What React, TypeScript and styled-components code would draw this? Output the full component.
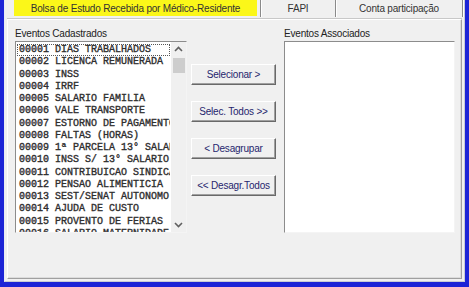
import styled, { createGlobalStyle } from "styled-components";

const GlobalStyle = createGlobalStyle`
  html, body {
    margin: 0;
    padding: 0;
    background: #1c24d6;
  }
  * {
    box-sizing: border-box;
  }
`;

const Frame = styled.div`
  width: 469px;
  height: 287px;
  background: #1c24d6;
  padding: 0 4px 5px 4px;
  overflow: hidden;
`;

const Window = styled.div`
  height: 100%;
  background: #f0f0f0;
  border-left: 1px solid #e8ecf4;
  border-right: 1px solid #c8ccd4;
  border-bottom: 1px solid #c8ccd4;
  display: flex;
  flex-direction: column;
  font-family: "Liberation Sans", Arial, sans-serif;
  font-size: 10px;
  color: #1a1a1a;
`;

const TabStrip = styled.div`
  height: 19px;
  display: flex;
  align-items: flex-start;
  padding-left: 9px;
`;

const Tab = styled.div<{ $w: number; $active?: boolean }>`
  width: ${(p) => p.$w}px;
  height: ${(p) => (p.$active ? 16 : 17)}px;
  display: flex;
  align-items: center;
  justify-content: center;
  background: ${(p) => (p.$active ? "#fbf719" : "transparent")};
  color: #333;
  letter-spacing: -0.2px;
  margin-right: ${(p) => (p.$active ? 3 : 0)}px;
  border-right: ${(p) => (p.$active ? "none" : "1px solid #8a8a8a")};
  box-shadow: ${(p) => (p.$active ? "none" : "1px 0 0 #ffffff")};
`;

const Separator = styled.div`
  width: 1px;
  height: 17px;
  background: #8a8a8a;
  box-shadow: 1px 0 0 #ffffff;
`;

const TabPage = styled.div`
  flex: 1;
  margin: 0 2px 2px 2px;
  border-top: 1px solid #ffffff;
  border-left: 1px solid #ffffff;
  border-right: 1px solid #a0a0a0;
  border-bottom: 1px solid #a0a0a0;
  box-shadow: inset -1px -1px 0 #dcdcdc, 0 -1px 0 #c8c8c8;
  display: flex;
  padding: 7px 0 0 7px;
`;

const Column = styled.div<{ $w: number }>`
  width: ${(p) => p.$w}px;
  display: flex;
  flex-direction: column;
`;

const Label = styled.div`
  height: 14px;
  line-height: 13px;
  color: #222;
  letter-spacing: -0.2px;
`;

const ListBox = styled.div<{ $w: number }>`
  width: ${(p) => p.$w}px;
  height: 192px;
  background: #ffffff;
  border-top: 1px solid #8c8c8c;
  border-left: 1px solid #8c8c8c;
  border-right: 1px solid #f4f4f4;
  border-bottom: 1px solid #f4f4f4;
  display: flex;
  overflow: hidden;
`;

const Items = styled.div`
  flex: 1;
  overflow: hidden;
  padding: 2px 1px 0 1px;
`;

const Item = styled.div<{ $focus?: boolean }>`
  height: 12.25px;
  line-height: 12px;
  padding-left: 2px;
  white-space: nowrap;
  overflow: hidden;
  font-family: "Liberation Mono", "Courier New", monospace;
  font-size: 10px;
  color: #2e2e2e;
  -webkit-text-stroke: 0.35px #2e2e2e;
  outline: ${(p) => (p.$focus ? "1px dotted #555" : "none")};
  outline-offset: -1px;
`;

const ScrollBar = styled.div`
  width: 15px;
  background: #f0f0f0;
  display: flex;
  flex-direction: column;
  align-items: center;
`;

const Arrow = styled.div`
  height: 14px;
  display: flex;
  align-items: center;
  justify-content: center;
`;

const Thumb = styled.div`
  width: 12px;
  height: 15px;
  background: #cdcdcd;
  margin-top: 2px;
`;

const Track = styled.div`
  flex: 1;
`;

const Buttons = styled.div`
  width: 97px;
  display: flex;
  flex-direction: column;
  gap: 16px;
  padding: 37px 0 0 4px;
`;

const Button = styled.div`
  width: 85px;
  height: 21px;
  display: flex;
  align-items: center;
  justify-content: center;
  background: #f0f0f0;
  color: #26266e;
  letter-spacing: -0.2px;
  border-top: 1px solid #ffffff;
  border-left: 1px solid #ffffff;
  border-right: 1px solid #696969;
  border-bottom: 1px solid #696969;
  box-shadow: inset -1px -1px 0 #a0a0a0;
`;

const Chevron = ({ up }: { up?: boolean }) => (
  <svg width="9" height="6" viewBox="0 0 9 6">
    <path
      d={up ? "M1 5 L4.5 1.5 L8 5" : "M1 1 L4.5 4.5 L8 1"}
      fill="none"
      stroke="#606060"
      strokeWidth="1.6"
    />
  </svg>
);

const events = [
  "00001 DIAS TRABALHADOS",
  "00002 LICENCA REMUNERADA",
  "00003 INSS",
  "00004 IRRF",
  "00005 SALARIO FAMILIA",
  "00006 VALE TRANSPORTE",
  "00007 ESTORNO DE PAGAMENTO",
  "00008 FALTAS (HORAS)",
  "00009 1ª PARCELA 13° SALARIO",
  "00010 INSS S/ 13° SALARIO",
  "00011 CONTRIBUICAO SINDICAL",
  "00012 PENSAO ALIMENTICIA",
  "00013 SEST/SENAT AUTONOMO",
  "00014 AJUDA DE CUSTO",
  "00015 PROVENTO DE FERIAS",
  "00016 SALARIO MATERNIDADE",
];

const actions = ["Selecionar >", "Selec. Todos >>", "< Desagrupar", "<< Desagr.Todos"];

export default function App() {
  return (
    <>
      <GlobalStyle />
      <Frame>
        <Window>
          <TabStrip>
            <Tab $w={243} $active>
              Bolsa de Estudo Recebida por Médico-Residente
            </Tab>
            <Separator />
            <Tab $w={75}>FAPI</Tab>
            <Tab $w={127}>Conta participação</Tab>
          </TabStrip>
          <TabPage>
            <Column $w={172}>
              <Label>Eventos Cadastrados</Label>
              <ListBox $w={172}>
                <Items>
                  {events.map((e, i) => (
                    <Item key={e} $focus={i === 0}>
                      {e}
                    </Item>
                  ))}
                </Items>
                <ScrollBar>
                  <Arrow>
                    <Chevron up />
                  </Arrow>
                  <Thumb />
                  <Track />
                  <Arrow>
                    <Chevron />
                  </Arrow>
                </ScrollBar>
              </ListBox>
            </Column>
            <Buttons>
              {actions.map((a) => (
                <Button key={a}>{a}</Button>
              ))}
            </Buttons>
            <Column $w={171}>
              <Label>Eventos Associados</Label>
              <ListBox $w={171} />
            </Column>
          </TabPage>
        </Window>
      </Frame>
    </>
  );
}
